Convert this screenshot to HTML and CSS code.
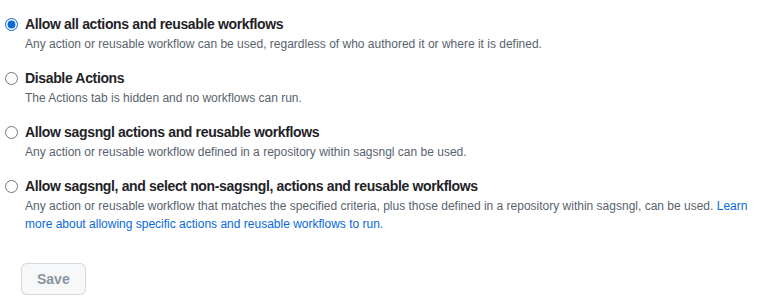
FILE: index.html
```html
<!DOCTYPE html>
<html lang="en">
<head>
  <meta charset="UTF-8" />
  <title>Actions permissions</title>
  <link rel="stylesheet" href="styles.css">
</head>
<body>
  <form class="policy-form">
    <div class="form-checkbox">
      <label><input type="radio" name="policy" checked> Allow all actions and reusable workflows</label>
      <p class="note">Any action or reusable workflow can be used, regardless of who authored it or where it is defined.</p>
    </div>
    <div class="form-checkbox">
      <label><input type="radio" name="policy"> Disable Actions</label>
      <p class="note">The Actions tab is hidden and no workflows can run.</p>
    </div>
    <div class="form-checkbox">
      <label><input type="radio" name="policy"> Allow sagsngl actions and reusable workflows</label>
      <p class="note">Any action or reusable workflow defined in a repository within sagsngl can be used.</p>
    </div>
    <div class="form-checkbox">
      <label><input type="radio" name="policy"> Allow sagsngl, and select non-sagsngl, actions and reusable workflows</label>
      <p class="note">Any action or reusable workflow that matches the specified criteria, plus those defined in a repository within sagsngl, can be used. <a href="#">Learn more about allowing specific actions and reusable workflows to run.</a></p>
    </div>
    <button type="button" class="btn" disabled>Save</button>
  </form>
</body>
</html>
```

FILE: styles.css
```css
body {
  margin: 0;
  font-family: "Liberation Sans", Arial, sans-serif;
  font-size: 14px;
  line-height: 1.5;
  color: #1f2328;
  background-color: #ffffff;
}

.policy-form {
  padding: 0 30px 0 0;
}

.form-checkbox {
  position: relative;
  padding-left: 25px;
  margin: 14px 0 15px;
}

.form-checkbox + .form-checkbox {
  margin-top: 15px;
}

.form-checkbox label {
  font-weight: 700;
  letter-spacing: -0.35px;
  display: block;
}

.form-checkbox input[type="radio"] {
  position: absolute;
  left: 5px;
  top: 4px;
  margin: 0;
  width: 13px;
  height: 13px;
  accent-color: #0969da;
}

.note {
  margin: 0;
  font-size: 12px;
  line-height: 18px;
  color: #59636e;
}

.note a {
  color: #0969da;
  text-decoration: none;
}

.btn {
  display: block;
  margin: 30px 0 0 21px;
  padding: 0 15px;
  height: 32px;
  font-family: inherit;
  font-size: 14px;
  font-weight: 700;
  color: #8c959f;
  background-color: #f6f8fa;
  border: 1px solid rgba(31, 35, 40, 0.15);
  border-radius: 6px;
}
```
